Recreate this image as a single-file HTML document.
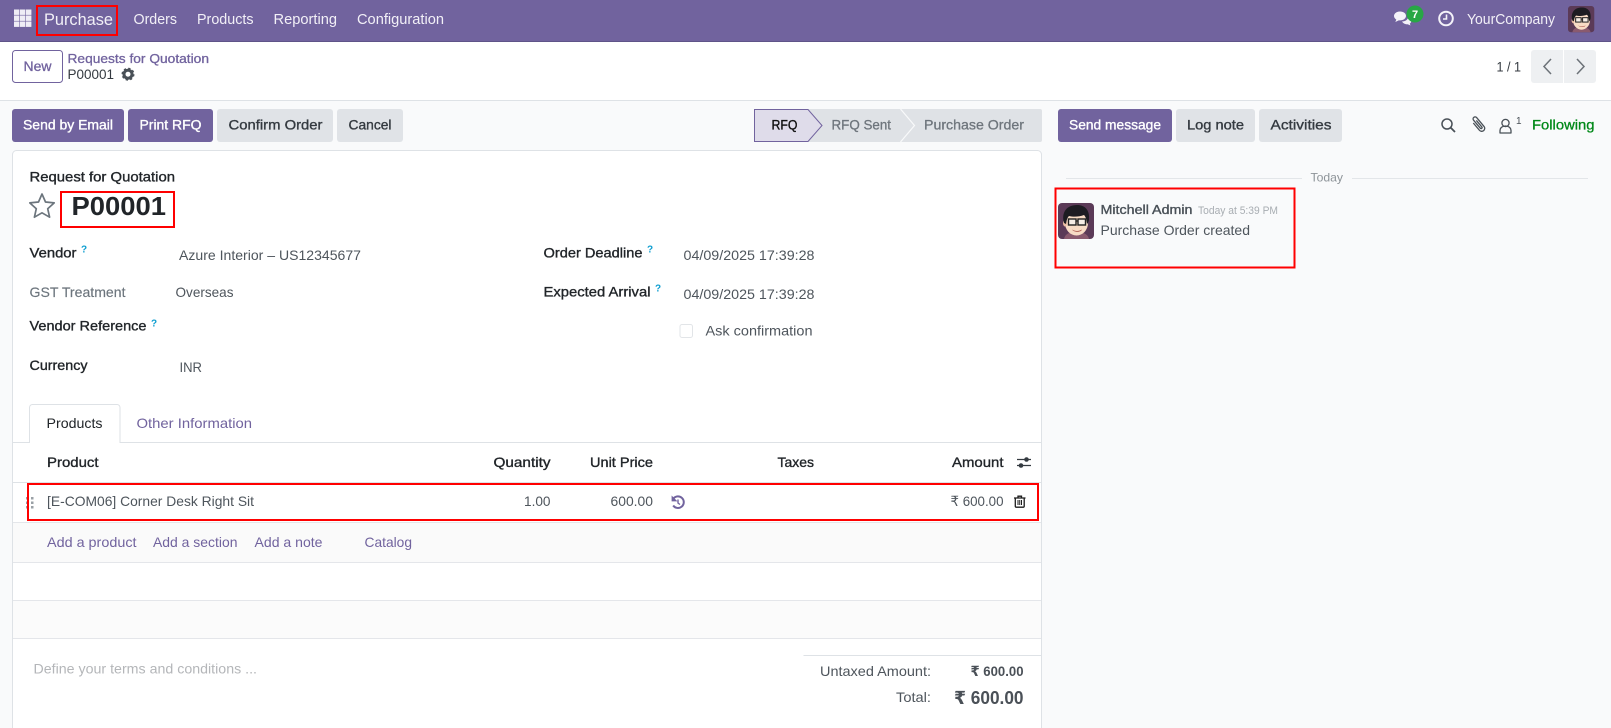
<!DOCTYPE html>
<html lang="en">
<head>
<meta charset="utf-8">
<title>P00001 - Purchase</title>
<style>
html,body{margin:0;padding:0;background:#f9fafb;width:1611px;height:728px;overflow:hidden}
svg{display:block}
text{font-family:"Liberation Sans","DejaVu Sans",sans-serif;font-size:14px;white-space:pre}
.nav{fill:#f2f0f7;font-size:14.5px}
.w{fill:#fff;stroke:#fff;stroke-width:.35px;font-size:14px}
.d{fill:#343a40;stroke:#343a40;stroke-width:.35px;font-size:14px}
.l{fill:#212529;stroke:#212529;stroke-width:.35px;font-size:14px}
.v{fill:#4e555c;font-size:14px}
.p{fill:#71639e;font-size:14px}
.q{fill:#0f9ed0;font-size:10px;font-weight:bold}
.g{fill:#6e757c;stroke:#6e757c;stroke-width:.3px;font-size:14px}
</style>
</head>
<body>
<svg xmlns="http://www.w3.org/2000/svg" width="1611" height="728" viewBox="0 0 1611 728">
<defs>
<g id="av">
<rect width="36" height="36" rx="4" fill="#5b3a57"/>
<path d="M6 36c1-5 5-7 12-7s12 2 13 7z" fill="#8a5a6e"/>
<ellipse cx="18.500" cy="20" rx="11.500" ry="12.500" fill="#f8dcc5"/>
<ellipse cx="7" cy="20" rx="2" ry="3.500" fill="#eebfa5"/>
<path d="M6 20C3 9 9 2 19 2c8 0 13 5 12 15-.5 2-1 3-2 4-.5-4-1-7-3-9-5 2-11 2-15 1-2 2-2.500 5-3 8z" fill="#1d1c22"/>
<rect x="10.500" y="16" width="7.500" height="6" fill="#f6eee6" stroke="#222" stroke-width="1.400"/>
<rect x="20" y="16" width="7.500" height="6" fill="#f6eee6" stroke="#222" stroke-width="1.400"/>
<path d="M18 18h2" stroke="#222" stroke-width="1.200"/>
<path d="M14 26.500c3 2 7 2 10 0-1 3-8 3-10 0z" fill="#a3483f"/>
</g>
</defs>

<rect width="1611" height="728" fill="#f9fafb"/>

<!-- navbar -->
<rect width="1611" height="41" fill="#71639e"/>
<rect y="41" width="1611" height="1" fill="#5f5488"/>
<g fill="#efedf5">
<rect x="14" y="9.500" width="5.400" height="5.400"/><rect x="20" y="9.500" width="5.400" height="5.400"/><rect x="26" y="9.500" width="5.400" height="5.400"/>
<rect x="14" y="15.500" width="5.400" height="5.400"/><rect x="20" y="15.500" width="5.400" height="5.400"/><rect x="26" y="15.500" width="5.400" height="5.400"/>
<rect x="14" y="21.500" width="5.400" height="5.400"/><rect x="20" y="21.500" width="5.400" height="5.400"/><rect x="26" y="21.500" width="5.400" height="5.400"/>
</g>
<text class="nav" x="44" y="25" textLength="69" lengthAdjust="spacingAndGlyphs" style="font-size:17px">Purchase</text>
<rect x="37" y="6" width="80" height="29" fill="none" stroke="#f00" stroke-width="2"/>
<text class="nav" x="133.500" y="24" textLength="43.500" lengthAdjust="spacingAndGlyphs">Orders</text>
<text class="nav" x="197" y="24" textLength="56.500" lengthAdjust="spacingAndGlyphs">Products</text>
<text class="nav" x="273.500" y="24" textLength="63.500" lengthAdjust="spacingAndGlyphs">Reporting</text>
<text class="nav" x="357" y="24" textLength="87" lengthAdjust="spacingAndGlyphs">Configuration</text>

<!-- systray -->
<g fill="#f4f2f9">
<path d="M1400 11.500c-3.500 0-6 2-6 4.500 0 1.500 1 2.800 2.300 3.600l-1 2.400 3.400-1.600h1.300c3.500 0 6-2 6-4.500s-2.500-4.400-6-4.400z"/>
<path d="M1402 21.500c2.800 0 5.500-1.500 6.300-4 1.800.7 3 2 3 3.500 0 1-.6 2-1.500 2.600l.7 1.900-2.800-1.200c-2.200.2-4.500-.8-5.700-2.800z"/>
</g>
<circle cx="1415" cy="14" r="8.500" fill="#28a745"/>
<text x="1415" y="18" text-anchor="middle" style="font-size:11px;font-weight:bold;fill:#fff">7</text>
<circle cx="1446" cy="18.500" r="6.800" fill="none" stroke="#f4f2f9" stroke-width="2"/>
<path d="M1446.500 14.500v4.500h-3.500" fill="none" stroke="#f4f2f9" stroke-width="1.600"/>
<text class="nav" x="1467" y="24" textLength="88" lengthAdjust="spacingAndGlyphs">YourCompany</text>
<use href="#av" transform="translate(1568 6) scale(.73)"/>

<!-- control panel -->
<rect y="42" width="1611" height="58" fill="#fff"/>
<rect y="100" width="1611" height="1" fill="#dee2e6"/>
<rect x="12.500" y="50.500" width="50" height="32" rx="3" fill="#fff" stroke="#71639e"/>
<text x="23.500" y="71" textLength="28" lengthAdjust="spacingAndGlyphs" style="fill:#71639e;stroke:#71639e;stroke-width:.3px;font-size:14px">New</text>
<text x="67.500" y="63" textLength="141.500" lengthAdjust="spacingAndGlyphs" style="fill:#71639e;stroke:#71639e;stroke-width:.3px;font-size:13px">Requests for Quotation</text>
<text x="67.500" y="79" textLength="46.500" lengthAdjust="spacingAndGlyphs" style="fill:#343a40;font-size:14px">P00001</text>
<circle cx="128" cy="74.200" r="4" fill="none" stroke="#495057" stroke-width="3"/>
<circle cx="128" cy="74.200" r="5.500" fill="none" stroke="#495057" stroke-width="2" stroke-dasharray="2.200 2.120"/>
<text x="1496.500" y="71.500" textLength="24.500" lengthAdjust="spacingAndGlyphs" style="fill:#343a40;font-size:14px">1 / 1</text>
<path d="M1534 50h29v33h-29a3 3 0 0 1-3-3V53a3 3 0 0 1 3-3z" fill="#eef0f2"/>
<path d="M1564 50h29a3 3 0 0 1 3 3v27a3 3 0 0 1-3 3h-29z" fill="#eef0f2"/>
<path d="M1551 59l-7 7.500 7 7.500" fill="none" stroke="#6c7278" stroke-width="1.500"/>
<path d="M1577 59l7 7.500-7 7.500" fill="none" stroke="#6c7278" stroke-width="1.500"/>

<!-- action buttons -->
<rect x="12" y="109" width="112" height="33" rx="3" fill="#71639e"/>
<text class="w" x="23" y="129.500" textLength="90" lengthAdjust="spacingAndGlyphs">Send by Email</text>
<rect x="128" y="109" width="85" height="33" rx="3" fill="#71639e"/>
<text class="w" x="139.500" y="129.500" textLength="62" lengthAdjust="spacingAndGlyphs">Print RFQ</text>
<rect x="217" y="109" width="116" height="33" rx="3" fill="#e0e3e7"/>
<text class="d" x="228.500" y="129.500" textLength="94" lengthAdjust="spacingAndGlyphs">Confirm Order</text>
<rect x="337" y="109" width="66" height="33" rx="3" fill="#e0e3e7"/>
<text class="d" x="348.500" y="129.500" textLength="43" lengthAdjust="spacingAndGlyphs">Cancel</text>

<!-- status bar -->
<rect x="754" y="109" width="288" height="33" rx="2" fill="#dfe2e6"/>
<path d="M754.500 109.500H808l14 16-14 16h-53.500z" fill="#dfdcea" stroke="#71639e"/>
<path d="M900.500 109l14 16.500-14 16.500" fill="none" stroke="#f9fafb" stroke-width="1.200"/>
<text x="771.500" y="129.500" textLength="26" lengthAdjust="spacingAndGlyphs" style="fill:#111;stroke:#111;stroke-width:.35px;font-size:14px">RFQ</text>
<text class="g" x="831.500" y="129.500" textLength="59.500" lengthAdjust="spacingAndGlyphs">RFQ Sent</text>
<text class="g" x="924" y="129.500" textLength="100" lengthAdjust="spacingAndGlyphs">Purchase Order</text>

<!-- card -->
<path d="M12.500 732V154.500a4 4 0 0 1 4-4H1037.500a4 4 0 0 1 4 4V732z" fill="#fff" stroke="#dee2e6"/>
<text class="l" x="29.500" y="181.500" textLength="145.500" lengthAdjust="spacingAndGlyphs">Request for Quotation</text>
<path d="M42 194l3.500 8 8.700.9-6.500 5.800 1.900 8.500L42 212.800l-7.600 4.400 1.900-8.500-6.500-5.800 8.700-.9z" fill="none" stroke="#6c757d" stroke-width="1.700" stroke-linejoin="round"/>
<text x="71.500" y="215" textLength="94.500" lengthAdjust="spacingAndGlyphs" style="font-size:26px;font-weight:bold;fill:#212529">P00001</text>
<rect x="61" y="192" width="113" height="35" fill="none" stroke="#f00" stroke-width="2"/>

<text class="l" x="29.500" y="257.500" textLength="47" lengthAdjust="spacingAndGlyphs">Vendor</text>
<text class="q" x="81" y="252.500">?</text>
<text class="v" x="179" y="260" textLength="182" lengthAdjust="spacingAndGlyphs">Azure Interior – US12345677</text>
<text x="29.500" y="297" textLength="96" lengthAdjust="spacingAndGlyphs" style="fill:#6c757d;stroke:#6c757d;stroke-width:.15px;font-size:14px">GST Treatment</text>
<text class="v" x="175.500" y="297" textLength="58" lengthAdjust="spacingAndGlyphs">Overseas</text>
<text class="l" x="29.500" y="330.500" textLength="117" lengthAdjust="spacingAndGlyphs">Vendor Reference</text>
<text class="q" x="151" y="326.500">?</text>
<text class="l" x="29.500" y="370" textLength="58" lengthAdjust="spacingAndGlyphs">Currency</text>
<text class="v" x="179.500" y="372" textLength="22.500" lengthAdjust="spacingAndGlyphs">INR</text>

<text class="l" x="543.500" y="257.500" textLength="99" lengthAdjust="spacingAndGlyphs">Order Deadline</text>
<text class="q" x="647" y="252.500">?</text>
<text class="v" x="683.500" y="260" textLength="131" lengthAdjust="spacingAndGlyphs">04/09/2025 17:39:28</text>
<text class="l" x="543.500" y="296.500" textLength="107" lengthAdjust="spacingAndGlyphs">Expected Arrival</text>
<text class="q" x="655" y="291.500">?</text>
<text class="v" x="683.500" y="299" textLength="131" lengthAdjust="spacingAndGlyphs">04/09/2025 17:39:28</text>
<rect x="680" y="324.500" width="12.500" height="13" rx="2" fill="#fff" stroke="#e2e5e8"/>
<text class="v" x="705.500" y="335.500" textLength="107" lengthAdjust="spacingAndGlyphs">Ask confirmation</text>

<!-- tabs -->
<rect x="13" y="442" width="1028" height="1" fill="#dee2e6"/>
<path d="M29.500 443V407.500a3 3 0 0 1 3-3h84.500a3 3 0 0 1 3 3V443" fill="#fff" stroke="#dee2e6"/>
<rect x="30" y="441" width="89" height="3" fill="#fff"/>
<text x="46.500" y="428" textLength="56" lengthAdjust="spacingAndGlyphs" style="fill:#212529;font-size:14px">Products</text>
<text class="p" x="136.500" y="428" textLength="115.500" lengthAdjust="spacingAndGlyphs">Other Information</text>

<!-- table -->
<text class="l" x="47" y="467" textLength="51.500" lengthAdjust="spacingAndGlyphs">Product</text>
<text class="l" x="493.500" y="467" textLength="57" lengthAdjust="spacingAndGlyphs">Quantity</text>
<text class="l" x="590" y="467" textLength="63" lengthAdjust="spacingAndGlyphs">Unit Price</text>
<text class="l" x="777.500" y="467" textLength="36.500" lengthAdjust="spacingAndGlyphs">Taxes</text>
<text class="l" x="952" y="467" textLength="51.500" lengthAdjust="spacingAndGlyphs">Amount</text>
<g stroke="#343a40" stroke-width="1.300" fill="#343a40">
<path d="M1017 459.500h14M1017 465.500h14" fill="none"/>
<circle cx="1026.500" cy="459.500" r="2.300" stroke="none"/>
<circle cx="1021" cy="465.500" r="2.300" stroke="none"/>
</g>
<rect x="13" y="482" width="1028" height="1" fill="#dee2e6"/>

<g fill="#9aa0a6">
<rect x="26" y="497" width="2.500" height="2.500"/><rect x="31" y="497" width="2.500" height="2.500"/>
<rect x="26" y="501.500" width="2.500" height="2.500"/><rect x="31" y="501.500" width="2.500" height="2.500"/>
<rect x="26" y="506" width="2.500" height="2.500"/><rect x="31" y="506" width="2.500" height="2.500"/>
</g>
<text class="v" x="47" y="506" textLength="207" lengthAdjust="spacingAndGlyphs">[E-COM06] Corner Desk Right Sit</text>
<text class="v" x="524" y="506" textLength="26.500" lengthAdjust="spacingAndGlyphs">1.00</text>
<text class="v" x="610.500" y="506" textLength="42.500" lengthAdjust="spacingAndGlyphs">600.00</text>
<path d="M673.500 498.500a5.800 5.800 0 1 1-.3 7" fill="none" stroke="#71639e" stroke-width="2"/>
<path d="M672 496.500v4.500h4.500z" fill="#71639e" stroke="#71639e" stroke-width=".8"/>
<path d="M678 499.500v3.500l2 1.500" fill="none" stroke="#71639e" stroke-width="1.400"/>
<text class="v" x="950.500" y="506" textLength="53" lengthAdjust="spacingAndGlyphs">₹ 600.00</text>
<g fill="none" stroke="#1d1d1d" stroke-width="1.300">
<path d="M1014 498h11.500M1018 498v-1.800h3.500v1.800"/>
<path d="M1015.300 498v8.300a.9.9 0 0 0 .9.9h7.100a.9.9 0 0 0 .9-.9V498"/>
<path d="M1018 500v5M1019.750 500v5M1021.500 500v5" stroke-width="1"/>
</g>
<rect x="13" y="522" width="1028" height="1" fill="#e4e6ea"/>
<rect x="13" y="523" width="1028" height="39" fill="#fafafa"/>
<rect x="28" y="484" width="1010" height="36" fill="none" stroke="#f00" stroke-width="2"/>

<text class="p" x="47" y="547" textLength="89.500" lengthAdjust="spacingAndGlyphs">Add a product</text>
<text class="p" x="153" y="547" textLength="84.500" lengthAdjust="spacingAndGlyphs">Add a section</text>
<text class="p" x="254.500" y="547" textLength="68" lengthAdjust="spacingAndGlyphs">Add a note</text>
<text class="p" x="364.500" y="547" textLength="47.500" lengthAdjust="spacingAndGlyphs">Catalog</text>
<rect x="13" y="562" width="1028" height="1" fill="#e4e6ea"/>
<rect x="13" y="600" width="1028" height="1" fill="#e4e6ea"/>
<rect x="13" y="601" width="1028" height="37" fill="#fbfbfb"/>
<rect x="13" y="638" width="1028" height="1" fill="#e4e6ea"/>

<text x="33.500" y="673.500" textLength="223.500" lengthAdjust="spacingAndGlyphs" style="fill:#b4b6b9;font-size:14px">Define your terms and conditions ...</text>

<rect x="803.500" y="655" width="237.500" height="1" fill="#dee2e6"/>
<text class="v" x="820" y="676" textLength="111" lengthAdjust="spacingAndGlyphs">Untaxed Amount:</text>
<text x="970.500" y="676" textLength="53" lengthAdjust="spacingAndGlyphs" style="fill:#4a5057;font-weight:bold;font-size:14px">₹ 600.00</text>
<text class="v" x="896" y="702" textLength="35" lengthAdjust="spacingAndGlyphs">Total:</text>
<text x="954" y="704" textLength="69.500" lengthAdjust="spacingAndGlyphs" style="fill:#4a5057;font-weight:bold;font-size:18px">₹ 600.00</text>

<!-- chatter -->
<rect x="1058" y="109" width="114" height="33" rx="3" fill="#71639e"/>
<text class="w" x="1069" y="129.500" textLength="92" lengthAdjust="spacingAndGlyphs">Send message</text>
<rect x="1176" y="109" width="79" height="33" rx="3" fill="#e0e3e7"/>
<text class="d" x="1187" y="129.500" textLength="57" lengthAdjust="spacingAndGlyphs">Log note</text>
<rect x="1259" y="109" width="83" height="33" rx="3" fill="#e0e3e7"/>
<text class="d" x="1270.500" y="129.500" textLength="61" lengthAdjust="spacingAndGlyphs">Activities</text>

<circle cx="1447" cy="124" r="5" fill="none" stroke="#495057" stroke-width="1.500"/>
<path d="M1450.500 127.500l4.500 4.500" stroke="#495057" stroke-width="1.800"/>
<g transform="rotate(-40 1478.500 124.500)" fill="none" stroke="#495057" stroke-width="1.300">
<path d="M1475.500 120v9.500a3 3 0 0 0 6 0v-11.500a2 2 0 0 0-4 0v10.500a1 1 0 0 0 2 0V120"/>
</g>
<circle cx="1505.500" cy="123" r="3.600" fill="none" stroke="#495057" stroke-width="1.300"/>
<path d="M1500 133v-2.500c0-2.800 2.400-4.500 5.500-4.500s5.500 1.700 5.500 4.500v2.500z" fill="none" stroke="#495057" stroke-width="1.300" stroke-linejoin="round"/>
<text x="1516" y="124" style="fill:#495057;font-size:10px">1</text>
<text x="1532" y="129.500" textLength="62.500" lengthAdjust="spacingAndGlyphs" style="fill:#008818;stroke:#008818;stroke-width:.3px;font-size:14px">Following</text>

<rect x="1066" y="178" width="236" height="1" fill="#e3e6e9"/>
<text x="1310.500" y="181.500" textLength="32.500" lengthAdjust="spacingAndGlyphs" style="fill:#8e9499;font-size:12px">Today</text>
<rect x="1352" y="178" width="236" height="1" fill="#e3e6e9"/>

<use href="#av" transform="translate(1058 203)"/>
<text x="1100.500" y="214" textLength="92" lengthAdjust="spacingAndGlyphs" style="fill:#495057;stroke:#495057;stroke-width:.35px;font-size:13px">Mitchell Admin</text>
<text x="1198" y="214" textLength="80" lengthAdjust="spacingAndGlyphs" style="fill:#a8adb2;font-size:11px">Today at 5:39 PM</text>
<text x="1100.500" y="235" textLength="149.500" lengthAdjust="spacingAndGlyphs" style="fill:#4e555c;font-size:14px">Purchase Order created</text>
<rect x="1055.500" y="188.500" width="239" height="79" fill="none" stroke="#f00" stroke-width="2"/>
</svg>
</body>
</html>
